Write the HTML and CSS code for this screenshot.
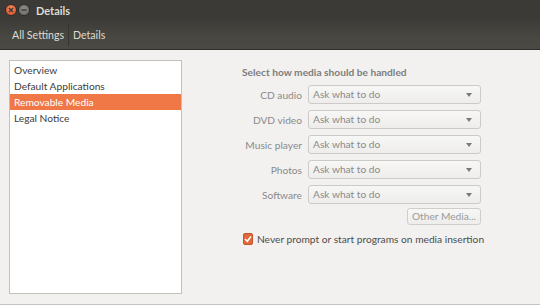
FILE: index.html
```html
<!DOCTYPE html>
<html lang="en">
<head>
  <meta charset="UTF-8" />
  <title>Details</title>
  <link rel="stylesheet" href="styles.css">
</head>
<body>
  <div class="window">
    <div class="titlebar">
      <span class="wbtn close">
        <svg width="8" height="8" viewBox="0 0 8 8"><path d="M2 2 L6 6 M6 2 L2 6" stroke="#3c3b37" stroke-width="1.5"/></svg>
      </span>
      <span class="wbtn minimize">
        <svg width="8" height="8" viewBox="0 0 8 8"><path d="M1.5 4 H6.5" stroke="#3c3b37" stroke-width="1.5"/></svg>
      </span>
      <span class="title">Details</span>
    </div>
    <div class="toolbar">
      <span class="crumb">All Settings</span>
      <span class="sep"></span>
      <span class="crumb">Details</span>
    </div>

    <div class="content">
      <ul class="sidebar">
        <li>Overview</li>
        <li>Default Applications</li>
        <li class="selected">Removable Media</li>
        <li>Legal Notice</li>
      </ul>

      <div class="main">
        <h3>Select how media should be handled</h3>
        <div class="form">
          <label>CD audio</label>
          <div class="combo">Ask what to do<span class="arrow"></span></div>
          <label>DVD video</label>
          <div class="combo">Ask what to do<span class="arrow"></span></div>
          <label>Music player</label>
          <div class="combo">Ask what to do<span class="arrow"></span></div>
          <label>Photos</label>
          <div class="combo">Ask what to do<span class="arrow"></span></div>
          <label>Software</label>
          <div class="combo">Ask what to do<span class="arrow"></span></div>
        </div>
        <div class="actions">
          <button>Other Media...</button>
        </div>
        <div class="check">
          <span class="box">
            <svg width="8" height="8" viewBox="0 0 8 8"><path d="M1 4 L3.2 6.2 L7 1.6" fill="none" stroke="#fff" stroke-width="1.6"/></svg>
          </span>
          Never prompt or start programs on media insertion
        </div>
      </div>
    </div>
  </div>
</body>
</html>
```

FILE: styles.css
```css
body {
  margin: 0;
  padding: 0;
  font-family: Lato, "Noto Sans", sans-serif;
  font-size: 10.2px;
  background: #f2f1f0;
}

.window {
  width: 540px;
  height: 305px;
  display: flex;
  flex-direction: column;
  overflow: hidden;
  box-sizing: border-box;
  border-bottom: 1px solid #c6c4c0;
}

.titlebar {
  height: 20px;
  background: #3b3a36;
  display: flex;
  align-items: center;
  padding-left: 5px;
  gap: 1px;
}

.wbtn {
  width: 10px;
  height: 10px;
  border-radius: 50%;
  display: flex;
  align-items: center;
  justify-content: center;
}

.close {
  background: radial-gradient(circle at 50% 35%, #f58a5c, #df4a22);
  border: 1px solid #2e2d2a;
}

.minimize {
  background: radial-gradient(circle at 50% 35%, #8c8b86, #6a6964);
  border: 1px solid #2e2d2a;
}

.title {
  color: #dfdbd2;
  font-weight: bold;
  margin-left: 5px;
  font-size: 11px;
}

.toolbar {
  height: 30px;
  background: linear-gradient(#3d3c38, #484741 60%, #4a4943);
  display: flex;
  align-items: center;
  padding-left: 12px;
  border-bottom: 1px solid #2f2e2a;
  box-sizing: border-box;
}

.crumb {
  color: #dfdbd2;
  font-size: 10.6px;
}

.sep {
  width: 1px;
  height: 22px;
  background: #35342f;
  margin: 0 4px;
}

.content {
  flex: 1;
  display: flex;
  padding: 10px 0 10px 9px;
}

.sidebar {
  list-style: none;
  margin: 0;
  padding: 1px 0 0;
  width: 173px;
  background: #fff;
  border: 1px solid #c3c1bd;
  box-sizing: border-box;
}

.sidebar li {
  height: 16px;
  line-height: 16px;
  padding-left: 4px;
  color: #3c3c3c;
}

.sidebar li.selected {
  background: #f07746;
  color: #fff;
}

.main {
  margin-left: 59px;
  width: 240px;
}

h3 {
  margin: 5px 0 0 1px;
  font-size: 10.2px;
  color: #7d7d7d;
  line-height: 14px;
}

.form {
  margin-top: 6px;
  display: grid;
  grid-template-columns: 61px 173px;
  column-gap: 6px;
  row-gap: 6px;
  align-items: center;
}

label {
  text-align: right;
  color: #8a8a8a;
  white-space: nowrap;
}

.combo {
  height: 19px;
  box-sizing: border-box;
  border: 1px solid #cdcbc7;
  border-radius: 3px;
  background: linear-gradient(#f7f7f6, #eeedeb);
  color: #8a8a8a;
  padding-left: 4px;
  line-height: 17px;
  position: relative;
}

.arrow {
  position: absolute;
  right: 8px;
  top: 7px;
  border-left: 3px solid transparent;
  border-right: 3px solid transparent;
  border-top: 4px solid #7a7a7a;
}

.actions {
  display: flex;
  justify-content: flex-end;
  margin-top: 4px;
}

button {
  font-family: inherit;
  font-size: 10.2px;
  height: 17px;
  padding: 0 4px;
  border: 1px solid #d0cecb;
  border-radius: 3px;
  background: linear-gradient(#f7f7f6, #eeedeb);
  color: #9a9a9a;
  line-height: 15px;
}

.check {
  display: flex;
  align-items: center;
  margin-top: 8px;
  padding-left: 2px;
  color: #4c4c4c;
  white-space: nowrap;
}

.box {
  width: 10px;
  height: 10px;
  border-radius: 2px;
  background: #e2673a;
  border: 1px solid #c45429;
  display: flex;
  align-items: center;
  justify-content: center;
  margin-right: 4px;
}
```
